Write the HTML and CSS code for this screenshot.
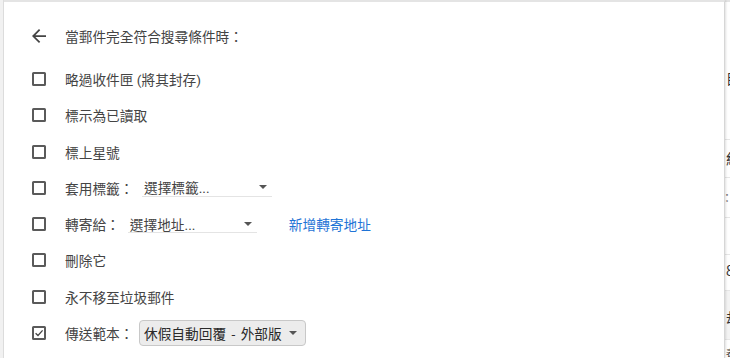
FILE: index.html
```html
<!DOCTYPE html>
<html lang="zh-Hant">
<head>
<meta charset="utf-8">
<title>篩選器動作</title>
<link rel="stylesheet" href="styles.css">
</head>
<body>
<div class="screen">
  <div class="edge-left"></div>
  <div class="panel">
    <div class="title-row">
      <svg class="back" viewBox="4 4 16 16" aria-hidden="true"><path d="M20 11H7.83l5.59-5.59L12 4l-8 8 8 8 1.41-1.41L7.83 13H20v-2z"/></svg>
      <span class="title">當郵件完全符合搜尋條件時：</span>
    </div>
    <ul class="options">
      <li class="option"><span class="cb"></span><span class="label">略過收件匣 (將其封存)</span></li>
      <li class="option"><span class="cb"></span><span class="label">標示為已讀取</span></li>
      <li class="option"><span class="cb"></span><span class="label">標上星號</span></li>
      <li class="option"><span class="cb"></span><span class="label">套用標籤：</span>
        <span class="select select-label"><span>選擇標籤...</span><span class="tri"></span></span>
      </li>
      <li class="option"><span class="cb"></span><span class="label">轉寄給：</span>
        <span class="select select-addr"><span>選擇地址...</span><span class="tri"></span></span>
        <a class="link" href="#">新增轉寄地址</a>
      </li>
      <li class="option"><span class="cb"></span><span class="label">刪除它</span></li>
      <li class="option"><span class="cb"></span><span class="label">永不移至垃圾郵件</span></li>
      <li class="option"><span class="cb cb-checked"><svg viewBox="0 0 10 10" aria-hidden="true"><polyline points="1.6,5.2 4,7.5 8.6,2.4"/></svg></span><span class="label">傳送範本：</span>
        <span class="template-btn"><span class="btn-text">休假自動回覆 - 外部版</span><span class="tri"></span></span>
      </li>
    </ul>
  </div>
  <div class="edge-right">
    <div class="bg-row r1"><span class="g">目</span></div>
    <div class="bg-row r2"><span class="g">紅</span></div>
    <div class="bg-row r3"><span class="g small">：</span></div>
    <div class="bg-row r4"></div>
    <div class="bg-row r5"><span class="g">8</span></div>
    <div class="bg-row r6"><span class="g">劫</span></div>
    <div class="bg-row r7"><span class="g tiny">表</span></div>
  </div>
</div>
</body>
</html>
```

FILE: styles.css
```css
html, body {
  margin: 0;
  padding: 0;
}

body {
  width: 730px;
  height: 358px;
  overflow: hidden;
  background: #ffffff;
  font-family: "Roboto", "Noto Sans CJK TC", sans-serif;
}

.screen {
  display: flex;
  height: 358px;
}

.edge-left {
  width: 3px;
  flex: none;
  background: #f1f1f1;
  border-right: 1px solid #dedede;
}

.panel {
  flex: 1;
  background: #ffffff;
  border-top: 2px solid #e4e4e4;
  border-right: 1px solid #d6d6d6;
  box-shadow: 1px 0 2px rgba(0, 0, 0, 0.12);
  padding: 22px 0 0 28px;
  color: #444444;
  font-size: 13.7px;
  position: relative;
  z-index: 1;
}

.title-row {
  display: flex;
  align-items: center;
  height: 24px;
}

.back {
  width: 14px;
  height: 14px;
  fill: #444444;
  margin-right: 19px;
  flex: none;
}

.title {
  color: #444444;
}

.options {
  list-style: none;
  margin: 12.8px 0 0 0;
  padding: 0;
}

.option {
  display: flex;
  align-items: center;
  height: 36.3px;
  white-space: nowrap;
}

.cb {
  width: 14px;
  height: 14px;
  box-sizing: border-box;
  border: 2px solid #5a5a5a;
  border-radius: 1.5px;
  margin-right: 19px;
  flex: none;
  display: flex;
  align-items: center;
  justify-content: center;
}

.cb-checked svg {
  width: 10px;
  height: 10px;
  fill: none;
  stroke: #444444;
  stroke-width: 1.3;
}

.label {
  color: #444444;
}

.select {
  display: flex;
  align-items: center;
  justify-content: space-between;
  height: 18px;
  box-sizing: border-box;
  border-bottom: 1px solid #e4e4e4;
  margin-left: 8.5px;
  padding: 0 5px 0 2px;
  color: #444444;
}

.select-label {
  width: 130px;
}

.select-addr {
  width: 129px;
  margin-left: 8px;
}

.tri {
  width: 0;
  height: 0;
  border-left: 4px solid transparent;
  border-right: 4px solid transparent;
  border-top: 4px solid #555555;
  flex: none;
}

.link {
  margin-left: 32px;
  color: #1f74d6;
  text-decoration: none;
}

.template-btn {
  display: flex;
  align-items: center;
  justify-content: space-between;
  width: 167px;
  height: 26px;
  box-sizing: border-box;
  margin-left: 5.5px;
  padding: 0 8px 0 4px;
  background: #ececec;
  border: 1px solid #c8c8c8;
  border-radius: 4px;
  color: #2a2a2a;
}

.btn-text {
  word-spacing: 2px;
}

.edge-right {
  width: 5px;
  flex: none;
  overflow: hidden;
  border-top: 2px solid #e4e4e4;
  background: #ffffff;
  display: flex;
  flex-direction: column;
  font-family: "Noto Sans CJK TC", sans-serif;
  font-size: 14px;
  line-height: 16px;
  color: #333333;
}

.bg-row {
  flex: none;
  border-bottom: 1px solid #e6e6e6;
  white-space: nowrap;
  padding-left: 1px;
  box-sizing: border-box;
}

.g {
  display: block;
}

.small {
  font-size: 12px;
  color: #777777;
  margin-left: -5px;
}

.tiny {
  font-size: 9px;
  line-height: 10px;
}

.r1 { height: 138px; padding-top: 68px; }
.r2 { height: 38px; padding-top: 10px; }
.r3 { height: 40px; padding-top: 12px; }
.r4 { height: 37px; }
.r5 { height: 36px; padding-top: 7px; }
.r6 { height: 49px; padding-top: 18px; background: #f3f3f3; }
.r7 { flex: 1; border-bottom: none; padding-top: 8px; }
```
